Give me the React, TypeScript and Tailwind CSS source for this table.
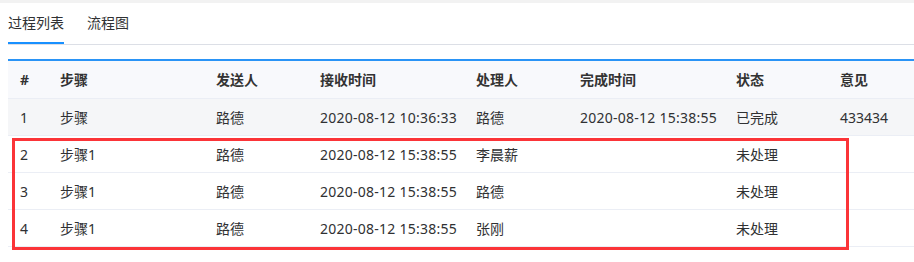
import React from "react";

type Row = {
  no: string;
  step: string;
  sender: string;
  received: string;
  handler: string;
  finished: string;
  status: string;
  comment: string;
};

const rows: Row[] = [
  { no: "1", step: "步骤", sender: "路德", received: "2020-08-12 10:36:33", handler: "路德", finished: "2020-08-12 15:38:55", status: "已完成", comment: "433434" },
  { no: "2", step: "步骤1", sender: "路德", received: "2020-08-12 15:38:55", handler: "李晨薪", finished: "", status: "未处理", comment: "" },
  { no: "3", step: "步骤1", sender: "路德", received: "2020-08-12 15:38:55", handler: "路德", finished: "", status: "未处理", comment: "" },
  { no: "4", step: "步骤1", sender: "路德", received: "2020-08-12 15:38:55", handler: "张刚", finished: "", status: "未处理", comment: "" },
];

const headers = ["#", "步骤", "发送人", "接收时间", "处理人", "完成时间", "状态", "意见"];

const gridCols = "grid grid-cols-[40px_156px_104px_156px_104px_156px_104px_1fr]";

export default function App() {
  return (
    <div
      className="w-[914px] h-[262px] bg-white overflow-hidden text-[14px] text-[#303133]"
      style={{ fontFamily: '"Noto Sans", "Noto Sans CJK SC", sans-serif' }}
    >
      <div className="h-[3px] bg-[#f2f2f2]" />
      <div className="pl-2">
        {/* tabs */}
        <div className="flex h-[42px] border-b border-[#dcdfe6]">
          <div className="relative flex items-center w-[56px] text-[#303133]">
            <span className="-mt-[3px]">过程列表</span>
            <div className="absolute left-0 right-0 bottom-0 h-[2px] bg-[#1890ff]" />
          </div>
          <div className="flex items-center ml-[23px] text-[#303133]">
            <span className="-mt-[3px]">流程图</span>
          </div>
        </div>

        {/* table */}
        <div className="relative mt-[14px] border-t-2 border-[#2a94f6]">
          <div className={`${gridCols} h-[38px] items-center bg-[#f8f9fc] border-b border-[#ebeef5] font-bold text-[#333]`}>
            {headers.map((h) => (
              <div key={h} className="pl-3">
                {h}
              </div>
            ))}
          </div>
          {rows.map((r, i) => (
            <div
              key={r.no}
              className={`${gridCols} h-[37px] items-center border-b border-[#ebeef5] ${i === 0 ? "bg-[#f5f6f8]" : "bg-white"}`}
            >
              <div className="pl-3">{r.no}</div>
              <div className="pl-3">{r.step}</div>
              <div className="pl-3">{r.sender}</div>
              <div className="pl-3 whitespace-nowrap tracking-[0.25px]">{r.received}</div>
              <div className="pl-3">{r.handler}</div>
              <div className="pl-3 whitespace-nowrap tracking-[0.25px]">{r.finished}</div>
              <div className="pl-3">{r.status}</div>
              <div className="pl-3">{r.comment}</div>
            </div>
          ))}

          {/* highlight frame around pending rows */}
          <div className="absolute left-[4px] top-[77px] w-[837px] h-[112px] border-[3px] border-[#fb3438] pointer-events-none" />
        </div>
      </div>
    </div>
  );
}
